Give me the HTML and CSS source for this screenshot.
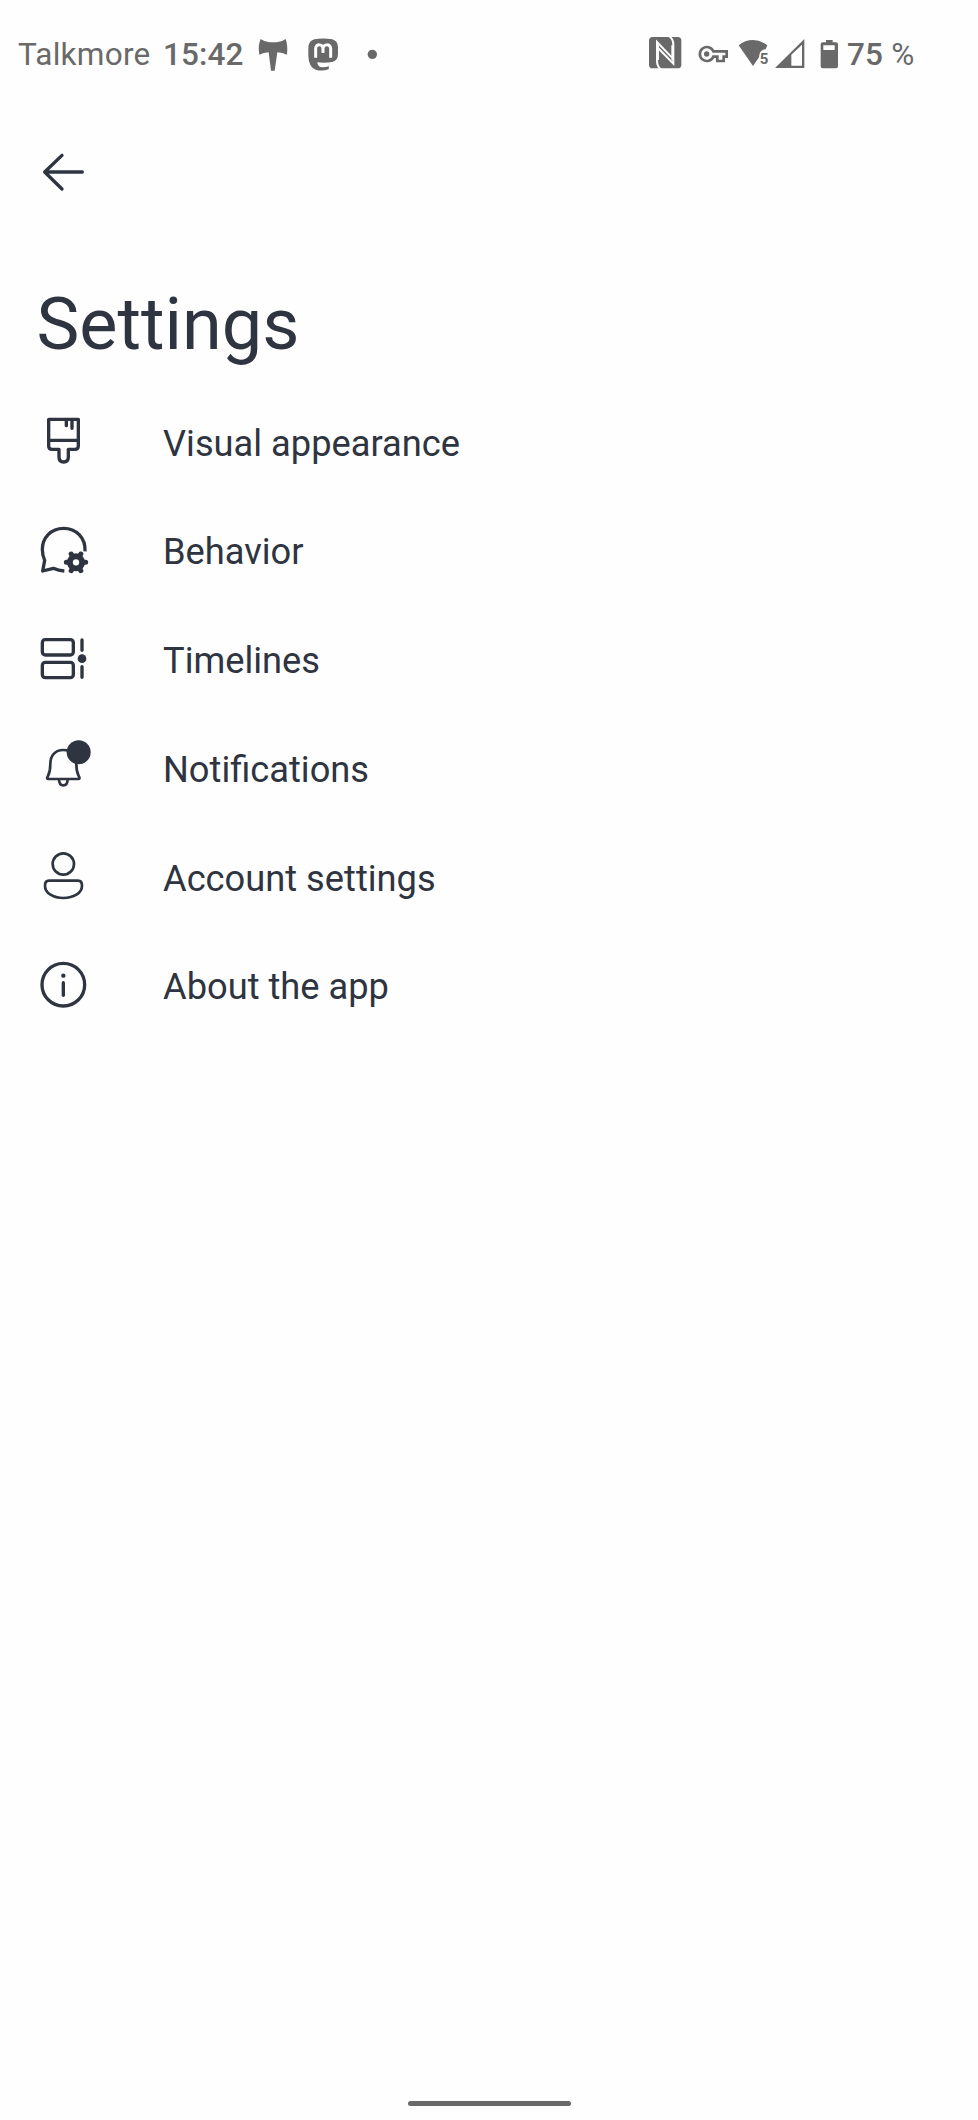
FILE: index.html
```html
<!DOCTYPE html>
<html lang="en">
<head>
<meta charset="utf-8">
<title>Settings</title>
<link rel="stylesheet" href="styles.css">
</head>
<body>
<div class="screen">
  <header class="status">
    <span class="carrier">Talkmore</span>
    <span class="clock">15:42</span>
    <svg class="s-bow" viewBox="48 0 102 210"><path d="M62 57 Q76 67 88 67 H110 Q124 67 137 57 Q144 76 141 104 Q127 98 112 97 L104 152 H93 L86 97 Q71 98 58 104 Q53 76 62 57Z"/></svg>
    <svg class="s-masto" viewBox="198 0 102 210"><path d="M223 58 Q249 53 277 58 Q294 63 294 82 V101 Q294 122 277 126 Q255 130 232 127 Q232 142 248 142 Q258 142 267 139 L266 148 Q246 155 227 149 Q206 141 205 108 V84 Q205 63 223 58Z"/><path class="cut" d="M227 113 V85 C227 71 249 71 249 86 V99 V86 C249 71 272 71 272 85 V113"/></svg>
    <svg class="s-dot" viewBox="378 0 39 210"><circle cx="397" cy="103" r="14"/></svg>
    <div class="status-right">
      <svg class="s-nfc" viewBox="54 0 102 210"><rect x="57" y="51" width="97" height="94" rx="11"/><path class="nfc-line" d="M92 147 Q81 139 81 122 V66 L126 113 M118 49 Q130 57 130 74 V131 L84 84"/><path class="nfc-line" d="M127 76 V120 M84 76 V120"/></svg>
      <svg class="s-key" viewBox="204 0 90 210"><path class="key-line" d="M250 94 H290 V110 H281 V123 H262 V110 H250 A21 21 0 1 1 250 94Z"/><circle cx="230" cy="102" r="8"/></svg>
      <svg class="s-wifi" viewBox="324 0 93 210"><path d="M326 76 Q345 60 369 60 Q393 60 412 76 L407 88 Q388 89 387 112 L369 138Z"/><text x="389" y="131">5</text></svg>
      <svg class="s-signal" viewBox="432 0 93 210"><path fill-rule="evenodd" d="M435 144 L523 57 V144Z M484 104 V137 H516 V74Z"/></svg>
      <svg class="s-battery" viewBox="60 0 57 210"><path fill-rule="evenodd" d="M78 60 H98 V67 H108 Q114 67 114 73 V139 Q114 145 108 145 H68 Q62 145 62 139 V73 Q62 67 68 67 H78Z M70 76 V90 H104 V76Z"/></svg>
      <span class="percent">75 <span class="sign">%</span></span>
    </div>
  </header>
  <nav class="toolbar">
    <svg class="back" viewBox="60 60 140 130"><path d="M126 76 L74 126 L126 177 M74 126 H187"/></svg>
  </nav>
  <h1 class="title">Settings</h1>
  <ul class="list">
    <li class="row">
      <svg class="icon" viewBox="0 4 240 240"><path d="M56 59 H145 V139 Q145 149 135 149 H115 V172 Q115 187 101 187 Q87 187 87 172 V149 H66 Q56 149 56 139Z M56 122 H145 M109 60 V78 M126 60 V86"/></svg>
      <span class="label">Visual appearance</span>
    </li>
    <li class="row">
      <svg class="icon" viewBox="0 0 240 240"><path class="butt" d="M165 124 C167 83 138 55 101 55 C62 55 37 84 37 118 Q37 136 44 151 L38 183 L70 175 Q85 182 103 183"/><circle class="solid" cx="138" cy="157" r="27"/><path class="teeth" d="M109 157 H167 M123.500 132 L152.500 182 M152.500 132 L123.500 182"/><circle class="hole" cx="138" cy="157" r="9.500"/></svg>
      <span class="label">Behavior</span>
    </li>
    <li class="row">
      <svg class="icon" viewBox="0 -3 240 240"><rect x="37" y="59" width="93" height="46" rx="9"/><rect x="37" y="127" width="93" height="46" rx="9"/><path d="M156 60 V91 M156 140 V172"/><circle class="solid" cx="156" cy="116" r="13"/></svg>
      <span class="label">Timelines</span>
    </li>
    <li class="row">
      <svg class="icon" viewBox="0 8 240 240"><path class="thin" d="M61 116 C61 91 75 74 100 74 C125 74 139 91 139 116 C139 141 142 143 148 156 Q150 161 145 161 H55 Q50 161 52 156 C58 143 61 141 61 116Z M87 161 Q87 180 100 180 Q113 180 113 161"/><circle class="solid" cx="146" cy="81" r="36"/></svg>
      <span class="label">Notifications</span>
    </li>
    <li class="row">
      <svg class="icon" viewBox="0 -11 240 240"><circle class="thin" cx="100" cy="73" r="32"/><path class="thin" d="M57 123 H144 Q156 123 156 138 C156 161 130 175 100 175 C70 175 45 161 45 138 Q45 123 57 123Z"/></svg>
      <span class="label">Account settings</span>
    </li>
    <li class="row">
      <svg class="icon" viewBox="0 315 240 240"><circle cx="100" cy="434" r="64"/><path d="M100 428 V466"/><circle class="solid" cx="100" cy="407" r="6.500"/></svg>
      <span class="label">About the app</span>
    </li>
  </ul>
  <div class="home-bar"></div>
</div>
</body>
</html>
```
FILE: styles.css
```css
body {
  margin: 0;
  background: #fefefe;
  color: #2e3440;
  font-family: Roboto, sans-serif;
}

.screen {
  display: flex;
  flex-direction: column;
  box-sizing: border-box;
  height: 2120px;
}

.status {
  display: flex;
  align-items: center;
  height: 70px;
  padding: 20px 0 0 18px;
  color: #696969;
  font-size: 31.500px;
  line-height: 72px;
  white-space: nowrap;
}

.status svg {
  flex: none;
  height: 70px;
  fill: #696969;
}

.carrier {
  width: 145px;
  letter-spacing: 0.250px;
}

.clock {
  width: 93px;
  font-weight: 500;
  letter-spacing: 0.100px;
}

.s-bow {
  width: 34px;
}

.s-masto {
  width: 34px;
  margin-left: 16px;
}

.s-dot {
  width: 13px;
  margin-left: 26px;
}

.status .cut {
  fill: none;
  stroke: #fefefe;
  stroke-width: 9;
}

.status-right {
  display: flex;
  align-items: center;
  margin-left: auto;
}

.s-nfc {
  width: 34px;
}

.status .nfc-line {
  fill: none;
  stroke: #fefefe;
  stroke-width: 6;
}

.s-key {
  width: 30px;
  margin-left: 16px;
}

.status .key-line {
  fill: none;
  stroke: #696969;
  stroke-width: 8;
}

.s-wifi {
  width: 31px;
  margin-left: 10px;
}

.s-wifi text {
  font-size: 45px;
  font-weight: 700;
}

.s-signal {
  width: 31px;
  margin-left: 5px;
}

.s-battery {
  width: 19px;
  margin-left: 15px;
}

.percent {
  width: 131px;
  margin-left: 8px;
  font-weight: 500;
  letter-spacing: 0.200px;
}

.sign {
  font-weight: 400;
}

.toolbar {
  padding: 60px 0 0 40px;
}

.back {
  display: block;
  width: 46.667px;
  height: 43.333px;
  fill: none;
  stroke: #2e3440;
  stroke-width: 10;
  stroke-linecap: round;
  stroke-linejoin: round;
}

.title {
  margin: 87px 0 0 36.500px;
  font-size: 72px;
  font-weight: 400;
  line-height: 90px;
}

.list {
  margin: 16.667px 0 0;
  padding: 0;
  list-style: none;
}

.row {
  display: flex;
  align-items: center;
  height: 108.750px;
  padding-left: 30px;
}

.icon {
  width: 80px;
  height: 80px;
  fill: none;
  stroke: #2e3440;
  stroke-width: 10;
  stroke-linecap: round;
  stroke-linejoin: round;
}

.icon .thin {
  stroke-width: 8;
}

.icon .butt {
  stroke-linecap: butt;
}

.icon .solid {
  fill: #2e3440;
  stroke: none;
}

.icon .teeth {
  stroke-width: 15;
}

.icon .hole {
  fill: #fefefe;
  stroke: none;
}

.label {
  margin-left: 53px;
  padding-top: 4.500px;
  font-size: 36.250px;
  line-height: 54px;
}

.home-bar {
  width: 163px;
  height: 5px;
  margin: auto auto 14px;
  border-radius: 3px;
  background: #696969;
}
```
